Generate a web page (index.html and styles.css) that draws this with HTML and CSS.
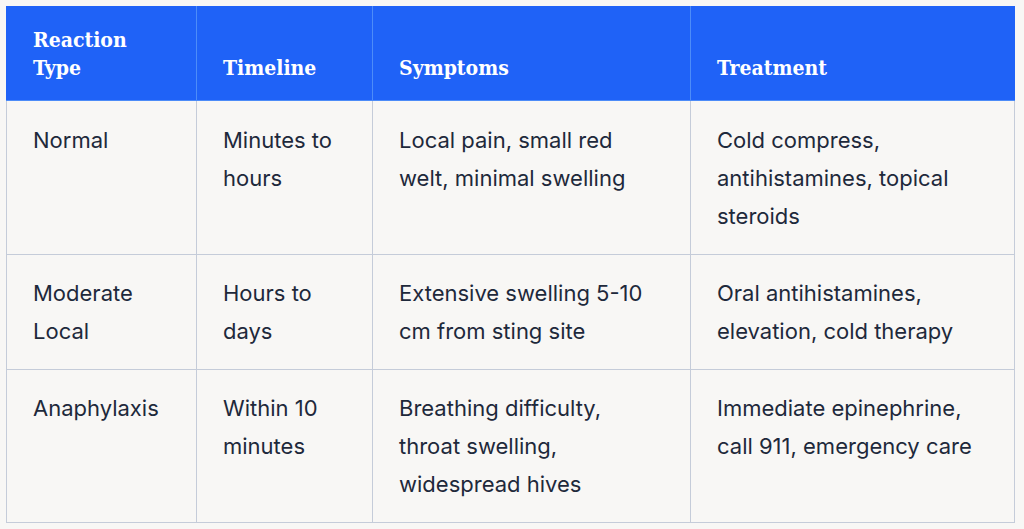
FILE: index.html
```html
<!DOCTYPE html>
<html>
<head>
<meta charset="utf-8">
<link rel="stylesheet" href="styles.css">
</head>
<body>
<table class="grid">
  <colgroup>
    <col class="c1"><col class="c2"><col class="c3"><col class="c4">
  </colgroup>
  <thead>
    <tr>
      <th>Reaction<br>Type</th>
      <th>Timeline</th>
      <th>Symptoms</th>
      <th>Treatment</th>
    </tr>
  </thead>
  <tbody>
    <tr class="first">
      <td>Normal</td>
      <td>Minutes to<br>hours</td>
      <td>Local pain, small red<br>welt, minimal swelling</td>
      <td>Cold compress,<br>antihistamines, topical<br>steroids</td>
    </tr>
    <tr>
      <td>Moderate<br>Local</td>
      <td>Hours to<br>days</td>
      <td>Extensive swelling 5-10<br>cm from sting site</td>
      <td>Oral antihistamines,<br>elevation, cold therapy</td>
    </tr>
    <tr>
      <td>Anaphylaxis</td>
      <td>Within 10<br>minutes</td>
      <td>Breathing difficulty,<br>throat swelling,<br>widespread hives</td>
      <td>Immediate epinephrine,<br>call 911, emergency care</td>
    </tr>
  </tbody>
</table>
</body>
</html>
```
FILE: styles.css
```css
html, body {
  margin: 0;
  padding: 0;
  background: #f8f7f5;
}
body {
  padding: 6px;
}
.grid {
  width: 1008px;
  border-collapse: collapse;
  table-layout: fixed;
  background: #f8f7f5;
  font-family: Inter, "Noto Sans", sans-serif;
}
.c1 { width: 190px; }
.c2 { width: 176px; }
.c3 { width: 318px; }
.c4 { width: 324px; }
.grid th {
  background: #1f62f7;
  color: #ffffff;
  font-family: "DejaVu Serif Condensed", "DejaVu Serif", serif;
  font-weight: 700;
  font-size: 21px;
  line-height: 28px;
  text-align: left;
  vertical-align: bottom;
  padding: 19px 26px 18px;
  border: 1px solid #4d8cf8;
  border-top-color: #1f62f7;
}
.grid th:first-child { border-left-color: #1f62f7; }
.grid th:last-child { border-right-color: #1f62f7; }
.grid td {
  color: #1e293b;
  font-size: 22px;
  line-height: 38px;
  vertical-align: top;
  padding: 19px 25px 19px 26px;
  border: 1px solid #c5ccd9;
}
.grid .first td {
  padding-top: 20px;
}
```
